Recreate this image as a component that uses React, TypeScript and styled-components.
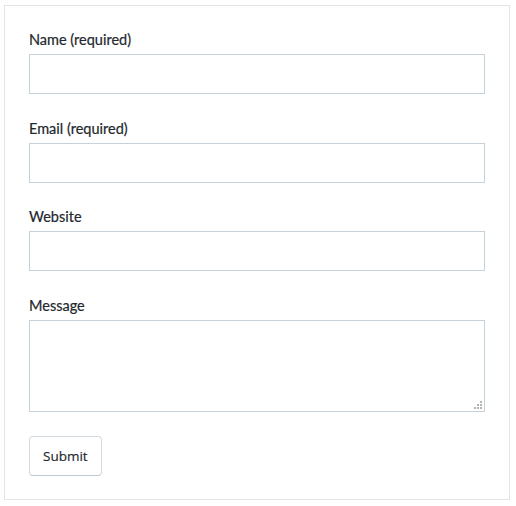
import styled, { createGlobalStyle } from 'styled-components';

const GlobalStyle = createGlobalStyle`
  body {
    margin: 0;
    background: #fff;
  }
`;

const Card = styled.form`
  box-sizing: border-box;
  width: 506px;
  margin: 5px 0 0 4px;
  padding: 23px 24px 23px;
  border: 1px solid #e1e5e9;
  display: flex;
  flex-direction: column;
  gap: 23.67px;
`;

const Field = styled.div`
  display: flex;
  flex-direction: column;
  gap: 4px;
`;

const Label = styled.label`
  font-family: Lato, "Noto Sans", sans-serif;
  font-size: 14.5px;
  font-weight: 400;
  line-height: 20px;
  padding-top: 1px;
  color: #23282d;
  -webkit-text-stroke: 0.2px #23282d;
`;

const Input = styled.input`
  box-sizing: border-box;
  width: 456px;
  height: 40px;
  margin: 0;
  padding: 0 10px;
  border: 1px solid #c5d2dc;
  border-radius: 0;
  background: #fff;
  font-family: Lato, sans-serif;
  font-size: 14px;
  outline: none;
`;

const AreaWrap = styled.div`
  position: relative;
  width: 456px;
`;

const TextArea = styled.textarea<{ $rows: number }>`
  box-sizing: border-box;
  display: block;
  width: 456px;
  height: ${p => p.$rows * 23}px;
  margin: 0;
  padding: 8px 10px;
  border: 1px solid #c5d2dc;
  border-radius: 0;
  background: #fff;
  font-family: Lato, sans-serif;
  font-size: 14px;
  outline: none;
  resize: none;
`;

const Grip = styled.svg`
  position: absolute;
  right: 3px;
  bottom: 3px;
  pointer-events: none;
`;

const Actions = styled.div`
  display: flex;
`;

const SubmitButton = styled.button`
  box-sizing: border-box;
  height: 40px;
  padding: 0 13px;
  border: 1px solid #d3dae0;
  border-bottom-color: #bfc8d0;
  border-radius: 4px;
  background: #fff;
  color: #23282d;
  font-family: "Open Sans", "Noto Sans", sans-serif;
  font-size: 13.5px;
  -webkit-text-stroke: 0.15px #23282d;
  cursor: pointer;
`;

function ResizeGrip() {
  const dots = [
    [7, 0],
    [4, 3], [7, 3],
    [1, 6], [4, 6], [7, 6],
  ];
  return (
    <Grip width="9" height="8" viewBox="0 0 9 8">
      {dots.map(([x, y]) => (
        <rect key={`${x}-${y}`} x={x} y={y} width="2" height="2" fill="#b4b4b4" />
      ))}
    </Grip>
  );
}

export default function App() {
  return (
    <>
      <GlobalStyle />
      <Card onSubmit={e => e.preventDefault()}>
        <Field>
          <Label htmlFor="name">Name (required)</Label>
          <Input id="name" type="text" />
        </Field>
        <Field>
          <Label htmlFor="email">Email (required)</Label>
          <Input id="email" type="email" />
        </Field>
        <Field>
          <Label htmlFor="website">Website</Label>
          <Input id="website" type="url" />
        </Field>
        <Field>
          <Label htmlFor="message">Message</Label>
          <AreaWrap>
            <TextArea id="message" $rows={4} />
            <ResizeGrip />
          </AreaWrap>
        </Field>
        <Actions>
          <SubmitButton type="submit">Submit</SubmitButton>
        </Actions>
      </Card>
    </>
  );
}
